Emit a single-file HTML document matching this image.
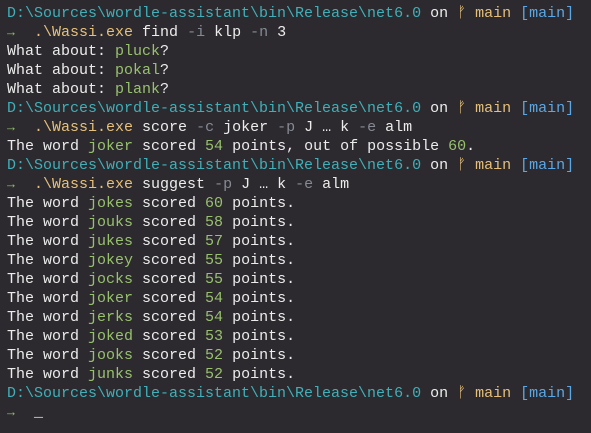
<!DOCTYPE html>
<html><head><meta charset="utf-8"><style>
html,body{margin:0;padding:0;background:#2c2a2e;width:591px;height:433px;overflow:hidden}
pre{margin:0;padding:4px 0 0 7px;font-family:"Liberation Mono","DejaVu Sans Mono",monospace;font-size:15px;line-height:19px;color:#ececec;white-space:pre}
.c{color:#3fb0b9}.y{color:#e6c07a}.b{color:#5aa8e6}.g{color:#98c16e}.d{color:#858a94}.a{color:#8cc265;font-size:13px;display:inline-block;width:9px}
</style></head><body><pre><span class="c">D:\Sources\wordle-assistant\bin\Release\net6.0</span> on <span class="y">ᚠ main</span> <span class="b">[main]</span>
<span class="a">→</span>  <span class="y">.\Wassi.exe</span> find <span class="d">-i</span> klp <span class="d">-n</span> 3
What about: <span class="g">pluck</span>?
What about: <span class="g">pokal</span>?
What about: <span class="g">plank</span>?
<span class="c">D:\Sources\wordle-assistant\bin\Release\net6.0</span> on <span class="y">ᚠ main</span> <span class="b">[main]</span>
<span class="a">→</span>  <span class="y">.\Wassi.exe</span> score <span class="d">-c</span> joker <span class="d">-p</span> J … k <span class="d">-e</span> alm
The word <span class="g">joker</span> scored <span class="g">54</span> points, out of possible <span class="g">60</span>.
<span class="c">D:\Sources\wordle-assistant\bin\Release\net6.0</span> on <span class="y">ᚠ main</span> <span class="b">[main]</span>
<span class="a">→</span>  <span class="y">.\Wassi.exe</span> suggest <span class="d">-p</span> J … k <span class="d">-e</span> alm
The word <span class="g">jokes</span> scored <span class="g">60</span> points.
The word <span class="g">jouks</span> scored <span class="g">58</span> points.
The word <span class="g">jukes</span> scored <span class="g">57</span> points.
The word <span class="g">jokey</span> scored <span class="g">55</span> points.
The word <span class="g">jocks</span> scored <span class="g">55</span> points.
The word <span class="g">joker</span> scored <span class="g">54</span> points.
The word <span class="g">jerks</span> scored <span class="g">54</span> points.
The word <span class="g">joked</span> scored <span class="g">53</span> points.
The word <span class="g">jooks</span> scored <span class="g">52</span> points.
The word <span class="g">junks</span> scored <span class="g">52</span> points.
<span class="c">D:\Sources\wordle-assistant\bin\Release\net6.0</span> on <span class="y">ᚠ main</span> <span class="b">[main]</span>
<span class="a">→</span>  _</pre></body></html>
